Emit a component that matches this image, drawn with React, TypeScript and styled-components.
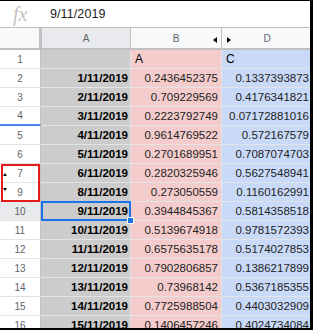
import React from 'react';
import styled, { createGlobalStyle, css } from 'styled-components';

const GlobalStyle = createGlobalStyle`
  html, body { margin: 0; padding: 0; background: #ffffff; }
  body { font-family: "Liberation Sans", Arial, sans-serif; }
  *, *::before, *::after { box-sizing: border-box; }
`;

const GRID_LINE = '#e2e3e3';
const HEAD_LINE = '#c0c0c0';

const Frame = styled.div`
  width: 313px;
  height: 330px;
  overflow: hidden;
  background: #ffffff;
  border-top: 1px solid #000;
  border-right: 3px solid #000;
  border-bottom: 2px solid #000;
  display: flex;
  flex-direction: column;
`;

const FormulaBar = styled.div`
  flex: none;
  height: 27px;
  display: flex;
  align-items: center;
  border-bottom: 1px solid ${HEAD_LINE};
`;

const FxIcon = styled.span`
  width: 50px;
  padding-left: 13px;
  font-family: "Liberation Serif", "Times New Roman", serif;
  font-style: italic;
  font-size: 20px;
  line-height: 1;
  color: #c4c4c4;
  margin-top: -1px;
`;

const FormulaText = styled.span`
  font-size: 12.5px;
  color: #222;
  letter-spacing: 0.1px;
`;

const HeaderRow = styled.div`
  flex: none;
  display: grid;
  grid-template-columns: 42px 89px 91px 91px;
  height: 22px;
  border-bottom: 2px solid ${HEAD_LINE};
  background: #f8f9fa;
`;

const Corner = styled.div`
  border-right: 3px solid ${HEAD_LINE};
`;

const ColHeader = styled.div<{ $active?: boolean; $hiddenAfter?: boolean; $hiddenBefore?: boolean }>`
  position: relative;
  display: flex;
  align-items: center;
  justify-content: center;
  font-size: 10px;
  color: #5f6368;
  border-right: 1px solid ${HEAD_LINE};
  background: ${(p) => (p.$active ? '#e8eaed' : '#f8f9fa')};
  ${(p) =>
    p.$hiddenAfter &&
    css`
      &::after {
        content: '';
        position: absolute;
        right: 4px;
        top: 9px;
        border-top: 3.5px solid transparent;
        border-bottom: 3.5px solid transparent;
        border-right: 4px solid #000;
      }
    `}
  ${(p) =>
    p.$hiddenBefore &&
    css`
      &::before {
        content: '';
        position: absolute;
        left: 5px;
        top: 9px;
        border-top: 3.5px solid transparent;
        border-bottom: 3.5px solid transparent;
        border-left: 4px solid #000;
      }
    `}
`;

const Body = styled.div`
  flex: none;
  position: relative;
`;

const Row = styled.div`
  display: grid;
  grid-template-columns: 41px 90px 91px 91px;
  height: 19px;
`;

const RowHead = styled.div<{ $active?: boolean; $marker?: boolean; $arrow?: 'up' | 'down' }>`
  position: relative;
  display: flex;
  align-items: center;
  justify-content: center;
  font-size: 10px;
  color: #5f6368;
  background: ${(p) => (p.$active ? '#e8eaed' : '#ffffff')};
  border-right: 1px solid ${HEAD_LINE};
  border-bottom: ${(p) => (p.$marker ? '2px solid #4a86e8' : `1px solid ${GRID_LINE}`)};
  ${(p) =>
    p.$arrow === 'up' &&
    css`
      &::before {
        content: '';
        position: absolute;
        left: 3px;
        top: 9px;
        border-left: 2.5px solid transparent;
        border-right: 2.5px solid transparent;
        border-bottom: 3px solid #000;
      }
    `}
  ${(p) =>
    p.$arrow === 'down' &&
    css`
      &::before {
        content: '';
        position: absolute;
        left: 3px;
        top: 5px;
        border-left: 2.5px solid transparent;
        border-right: 2.5px solid transparent;
        border-top: 3px solid #000;
      }
    `}
`;

const DateCell = styled.div<{ $selected?: boolean }>`
  position: relative;
  display: flex;
  align-items: center;
  justify-content: flex-end;
  padding-right: 2px;
  background: #cccccc;
  border-right: 1px solid ${GRID_LINE};
  border-bottom: 1px solid ${GRID_LINE};
  font-size: 11.5px;
  font-weight: bold;
  color: #000;
  white-space: nowrap;
  ${(p) =>
    p.$selected &&
    css`
      &::before {
        content: '';
        position: absolute;
        left: 0;
        right: -1px;
        top: -1px;
        bottom: -1px;
        border: 2px solid #1a73e8;
        z-index: 2;
      }
      &::after {
        content: '';
        position: absolute;
        right: -4px;
        bottom: -4px;
        width: 7px;
        height: 7px;
        background: #1a73e8;
        border: 1px solid #ffffff;
        z-index: 3;
      }
    `}
`;

const ValueCell = styled.div<{ $tone: 'pink' | 'blue'; $label?: boolean }>`
  display: flex;
  align-items: center;
  justify-content: ${(p) => (p.$label ? 'flex-start' : 'flex-end')};
  padding: ${(p) => (p.$label ? '0 0 0 4px' : '0 3px 0 0')};
  overflow: hidden;
  white-space: nowrap;
  background: ${(p) => (p.$tone === 'pink' ? '#f4cccc' : '#c9daf8')};
  border-right: 1px solid ${GRID_LINE};
  border-bottom: 1px solid ${GRID_LINE};
  font-size: ${(p) => (p.$label ? '12px' : '11.5px')};
  color: ${(p) => (p.$label ? '#000' : '#222')};
`;

const HiddenRowsBox = styled.div`
  position: absolute;
  left: 1px;
  top: 114px;
  width: 39px;
  height: 38px;
  border: 2px solid #e31c1c;
  pointer-events: none;
`;

type RowData = { n: number; date: string; b: string; d: string; label?: boolean };

const rows: RowData[] = [
  { n: 1, date: '', b: 'A', d: 'C', label: true },
  { n: 2, date: '1/11/2019', b: '0.2436452375', d: '0.1337393873' },
  { n: 3, date: '2/11/2019', b: '0.709229569', d: '0.4176341821' },
  { n: 4, date: '3/11/2019', b: '0.2223792749', d: '0.07172881016' },
  { n: 5, date: '4/11/2019', b: '0.9614769522', d: '0.572167579' },
  { n: 6, date: '5/11/2019', b: '0.2701689951', d: '0.7087074703' },
  { n: 7, date: '6/11/2019', b: '0.2820325946', d: '0.5627548941' },
  { n: 9, date: '8/11/2019', b: '0.273050559', d: '0.1160162991' },
  { n: 10, date: '9/11/2019', b: '0.3944845367', d: '0.5814358518' },
  { n: 11, date: '10/11/2019', b: '0.5139674918', d: '0.9781572393' },
  { n: 12, date: '11/11/2019', b: '0.6575635178', d: '0.5174027853' },
  { n: 13, date: '12/11/2019', b: '0.7902806857', d: '0.1386217899' },
  { n: 14, date: '13/11/2019', b: '0.73968142', d: '0.5367185355' },
  { n: 15, date: '14/11/2019', b: '0.7725988504', d: '0.4403032909' },
  { n: 16, date: '15/11/2019', b: '0.1406457246', d: '0.4024734084' },
];

export default function App() {
  return (
    <>
      <GlobalStyle />
      <Frame>
        <FormulaBar>
          <FxIcon>fx</FxIcon>
          <FormulaText>9/11/2019</FormulaText>
        </FormulaBar>
        <HeaderRow>
          <Corner />
          <ColHeader $active>A</ColHeader>
          <ColHeader $hiddenAfter>B</ColHeader>
          <ColHeader $hiddenBefore>D</ColHeader>
        </HeaderRow>
        <Body>
          {rows.map((r) => (
            <Row key={r.n}>
              <RowHead
                $active={r.n === 10}
                $marker={r.n === 4}
                $arrow={r.n === 7 ? 'up' : r.n === 9 ? 'down' : undefined}
              >
                {r.n}
              </RowHead>
              <DateCell $selected={r.n === 10}>{r.date}</DateCell>
              <ValueCell $tone="pink" $label={r.label}>
                {r.b}
              </ValueCell>
              <ValueCell $tone="blue" $label={r.label}>
                {r.d}
              </ValueCell>
            </Row>
          ))}
          <HiddenRowsBox />
        </Body>
      </Frame>
    </>
  );
}
